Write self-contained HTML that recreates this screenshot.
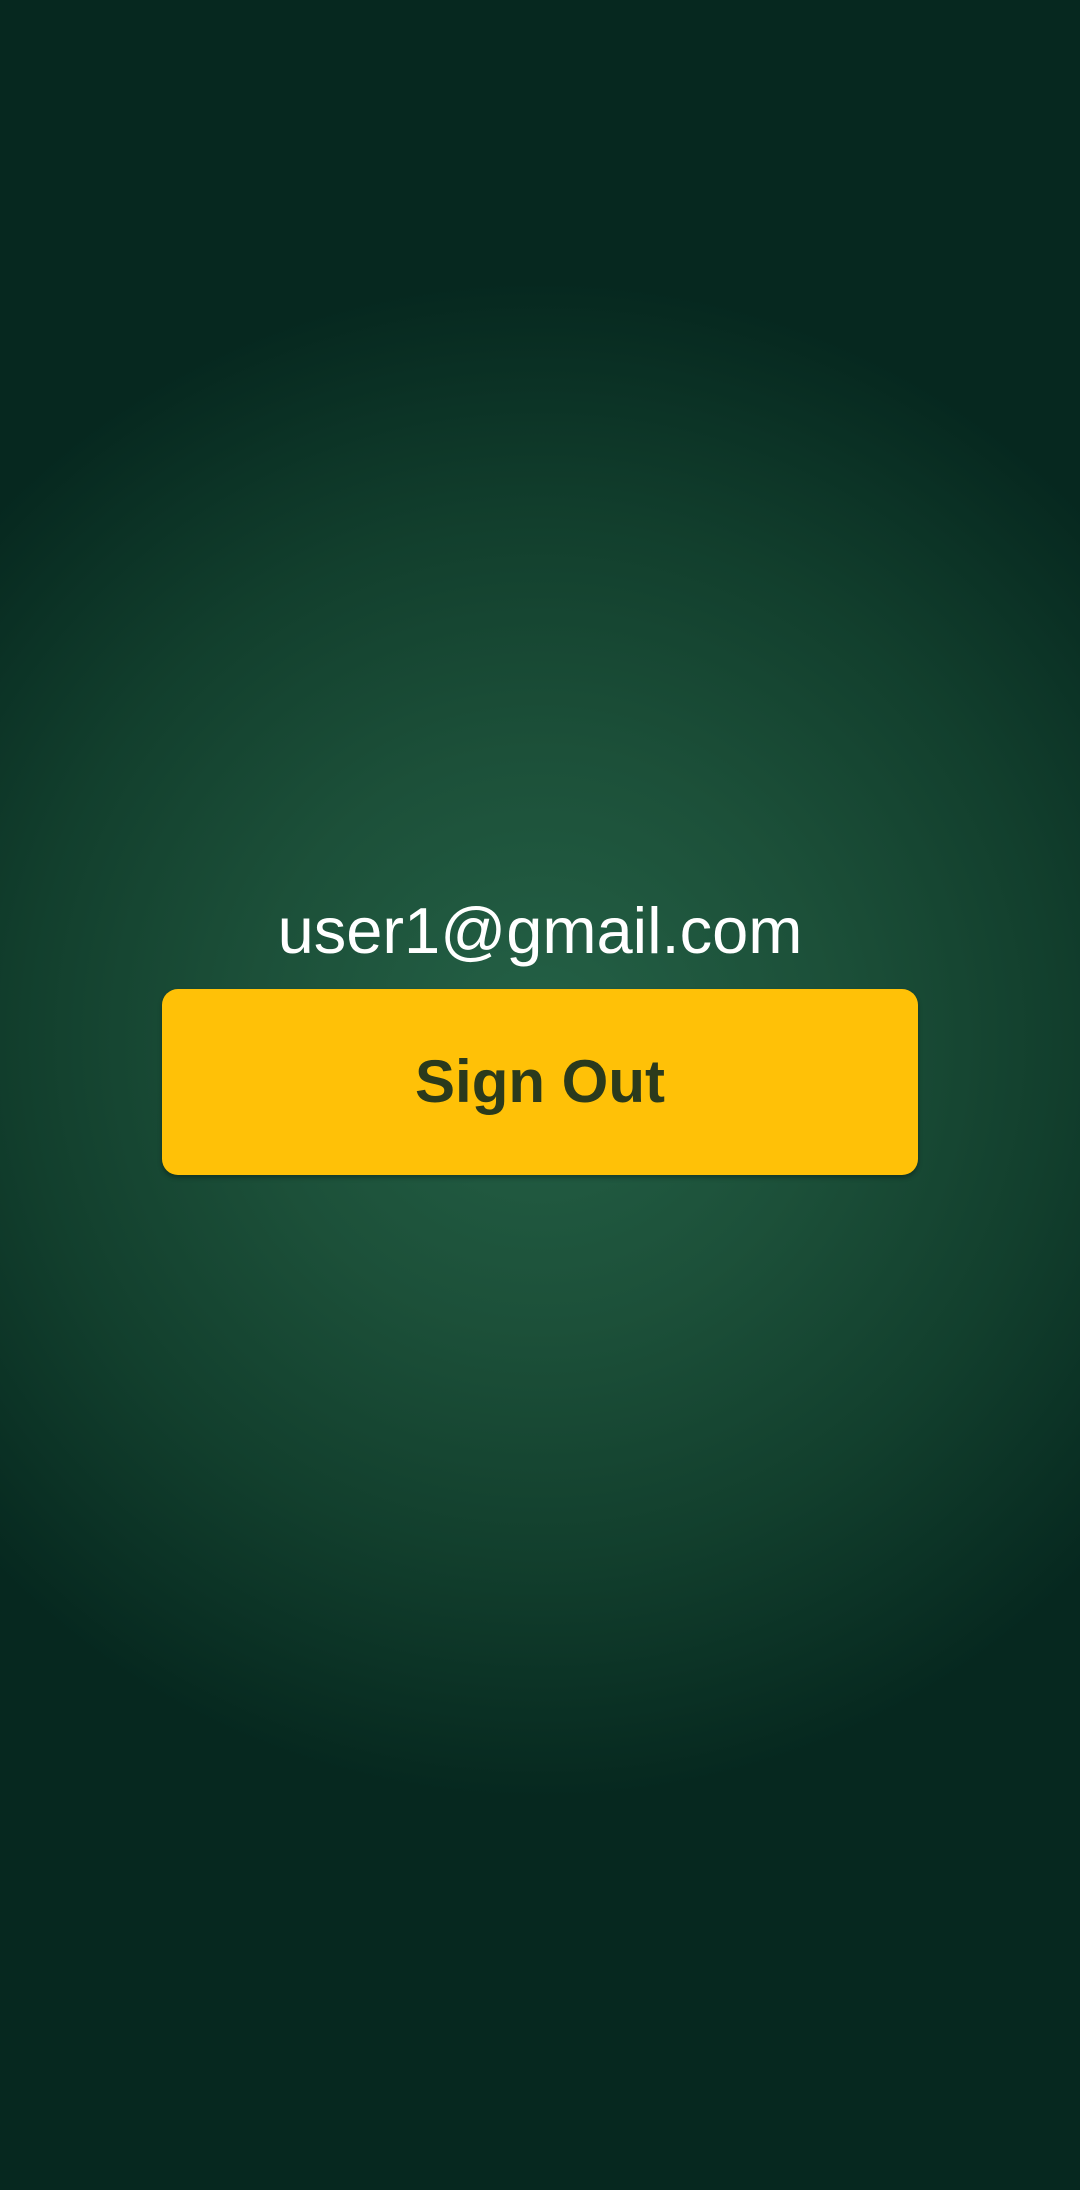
<!DOCTYPE html>
<html><head><meta charset="utf-8"><style>
html,body{margin:0;padding:0;}
body{width:1080px;height:2190px;overflow:hidden;position:relative;
background:radial-gradient(circle 760px at 540px 1040px,#246146 0%,#1c5039 38%,#123f2d 68%,#06281f 100%);
font-family:"Liberation Sans",sans-serif;}
.email{position:absolute;left:0;width:1080px;top:893px;text-align:center;color:#fff;font-size:65px;line-height:76px;}
.btn{position:absolute;left:162px;top:989px;width:756px;height:186px;background:#ffc107;border-radius:16px;
box-shadow:0 3px 5px rgba(0,0,0,0.3);text-align:center;line-height:186px;color:#2b3a1c;font-size:60px;font-weight:bold;}
</style></head><body>
<div class="email">user1@gmail.com</div>
<div class="btn">Sign Out</div>
</body></html>
